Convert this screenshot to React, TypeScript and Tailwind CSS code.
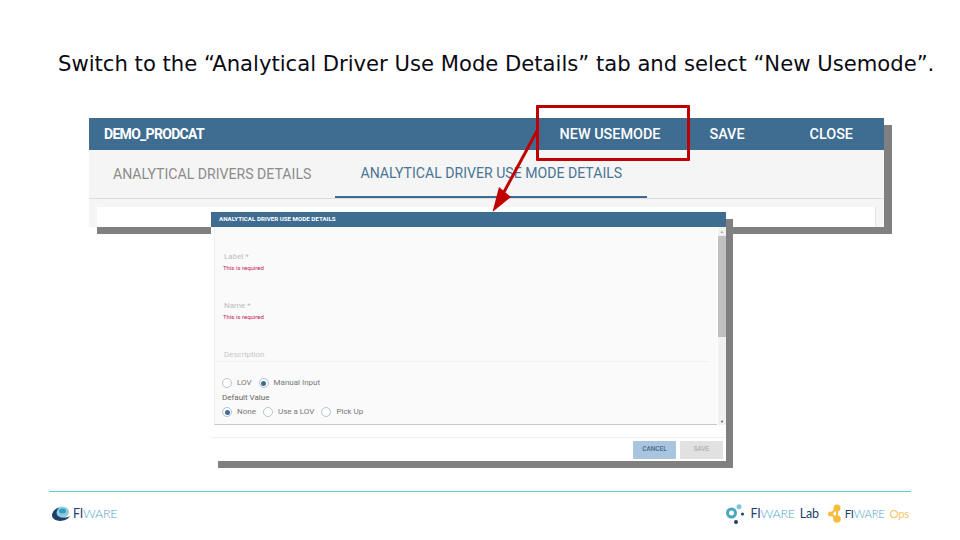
const roboto = "font-['Roboto',sans-serif]";

function Radio({ on }: { on?: boolean }) {
  return (
    <span className={`flex h-[10px] w-[10px] items-center justify-center rounded-full border ${on ? "border-[#a9c3d8]" : "border-[#b4c4d0]"} bg-white`}>
      {on && <span className="h-[5px] w-[5px] rounded-full bg-[#3f6c91]" />}
    </span>
  );
}

function RadioLabel({ on, label }: { on?: boolean; label: string }) {
  return (
    <span className="flex items-center gap-[5px]">
      <Radio on={on} />
      <span className="text-[8px] leading-[10px] text-[#777]">{label}</span>
    </span>
  );
}

function Field({ label, error }: { label: string; error?: boolean }) {
  return (
    <div className="flex h-[49px] flex-col">
      <span className="pl-[9px] text-[8px] leading-[10px] text-[#bdbdbd]">{label}</span>
      {error && <span className="mt-[2px] pl-[8px] text-[6px] leading-[8px] text-[#c2185b]">This is required</span>}
    </div>
  );
}

function Modal() {
  return (
    <div className={`absolute left-[211px] top-[212px] flex h-[249px] w-[515px] flex-col bg-white shadow-[7px_7px_0_#808080] ${roboto}`}>
      <div className="flex h-[15px] shrink-0 items-center bg-[#3f6c91] pl-[8px] text-[6.2px] font-bold text-white">
        ANALYTICAL DRIVER USE MODE DETAILS
      </div>
      <div className="flex h-[198px] shrink-0 pl-[3px]">
        <div className="flex w-[503px] flex-col border-b border-l border-[#c8c8c8] border-l-[#eeeeee] bg-[#fafafa] pt-[25px]">
          <Field label="Label *" error />
          <Field label="Name *" error />
          <div className="mr-[8px] h-[12px] shrink-0 border-b border-[#f1f1f1]">
            <span className="block pl-[9px] text-[8px] leading-[10px] text-[#c8c8c8]">Description</span>
          </div>
          <div className="mt-[16px] flex flex-col pl-[7px]">
            <div className="flex gap-[7px]">
              <RadioLabel label="LOV" />
              <RadioLabel on label="Manual Input" />
            </div>
            <span className="mt-[5px] text-[8px] leading-[10px] text-[#666]">Default Value</span>
            <div className="mt-[4px] flex gap-[7px]">
              <RadioLabel on label="None" />
              <RadioLabel label="Use a LOV" />
              <RadioLabel label="Pick Up" />
            </div>
          </div>
        </div>
        <div className="ml-[1px] flex w-[8px] flex-col items-center bg-[#f1f1f1]">
          <span className="mt-[3px] text-[4px] leading-[4px] text-[#a0a0a0]">▲</span>
          <span className="mt-[2px] h-[101px] w-full bg-[#c1c1c1]" />
          <span className="mt-auto mb-[1px] text-[4px] leading-[4px] text-[#505050]">▼</span>
        </div>
      </div>
      <div className="mt-[12px] flex justify-end gap-[4px] border-t border-[#f0f0f0] pr-[3px] pt-[3px]">
        <button className="h-[18px] w-[43px] rounded-[1px] bg-[#a9c4de] text-[6.5px] font-medium text-[#3f6c91]">CANCEL</button>
        <button className="h-[18px] w-[43px] bg-[#e1e1e1] text-[6.5px] text-[#a5a5a5]">SAVE</button>
      </div>
    </div>
  );
}

function Panel() {
  return (
    <div className={`ml-[89px] mt-[41px] flex h-[109px] w-[795px] flex-col overflow-hidden bg-[#f5f5f5] shadow-[8px_7px_0_#808080] ${roboto}`}>
      <div className="flex h-[32px] shrink-0 items-center bg-[#3f6c91] pt-[1px] text-[14.4px] font-medium text-white">
        <span className="ml-[15px] text-[14px] font-bold tracking-[-0.7px]">DEMO_PRODCAT</span>
        <span className="ml-auto">NEW USEMODE</span>
        <span className="ml-[49px]">SAVE</span>
        <span className="ml-[65px] mr-[31px]">CLOSE</span>
      </div>
      <div className="flex h-[49px] shrink-0 border-b border-[#dcdcdc] text-[14.1px]">
        <span className="ml-[24px] flex items-center pt-[1px] text-[#8c8c8c]">ANALYTICAL DRIVERS DETAILS</span>
        <span className="ml-[24px] flex w-[312px] items-center justify-center border-b-2 border-[#3f6c91] pt-[2px] text-[#4a7596]">
          ANALYTICAL DRIVER USE MODE DETAILS
        </span>
      </div>
      <div className="mx-[8px] mt-[8px] flex-1 border-r border-[#e4e4e4] bg-white" />
    </div>
  );
}

function Callout() {
  return (
    <>
      <div className="absolute left-[536px] top-[105px] h-[56px] w-[154px] rounded-[1px] border-[3px] border-[#c00000]" />
      <svg className="absolute left-[485px] top-[120px]" width="60" height="100" viewBox="0 0 60 100" fill="none">
        <path d="M53 9 L19 72" stroke="#c00000" strokeWidth="3" />
        <path d="M7.500 92 L14 67 L26 77 Z" fill="#c00000" />
      </svg>
    </>
  );
}

function Wordmark({ suffix, suffixColor, small }: { suffix?: string; suffixColor?: string; small?: boolean }) {
  return (
    <span className={`font-['Lato',sans-serif] leading-none tracking-[-0.25px] text-[#1d3f6e] ${small ? "text-[11.3px]" : "text-[12.5px]"}`}>
      FI<span className="font-light text-[#4fa5c2]">WARE</span>
      {suffix && <span className={`ml-[5px] ${suffixColor}`}>{suffix}</span>}
    </span>
  );
}

function Footer() {
  return (
    <div className="mx-[49px] mt-auto flex flex-col">
      <div className="h-px bg-[#63cdd5]" />
      <div className="flex h-[48px] items-center justify-between pb-[4px] pl-[2px] pr-[2px]">
        <div className="flex items-center gap-[2px]">
          <svg width="20" height="17" viewBox="0 0 20 17">
            <ellipse cx="11" cy="6" rx="7" ry="5.500" fill="#8fcbdb" />
            <ellipse cx="11.500" cy="5" rx="3.500" ry="2.500" fill="#2f9fc0" />
            <path d="M1 10 C1 5 5 2 8 2 C5 5 5 8 7 10 C10 12 15 12 19 10 C16 16 3 17 1 10 Z" fill="#1d3f6e" />
          </svg>
          <Wordmark />
        </div>
        <div className="flex items-center gap-[8px]">
          <div className="flex items-center gap-[4px]">
            <svg width="20" height="20" viewBox="0 0 20 20">
              <circle cx="5.500" cy="9" r="4" fill="none" stroke="#4ba7c0" strokeWidth="3" />
              <circle cx="13" cy="2.800" r="2.500" fill="#7fc4d6" />
              <circle cx="16.500" cy="10" r="1.500" fill="#1d3f6e" />
              <circle cx="10" cy="18" r="2" fill="#1d3f6e" />
            </svg>
            <Wordmark suffix="Lab" suffixColor="text-[#1d3f6e]" />
          </div>
          <div className="flex items-center gap-[2px]">
            <svg width="16" height="20" viewBox="0 0 16 20">
              <path d="M4 10 L10 4 L10 15 Z" fill="none" stroke="#f7bb3d" strokeWidth="2" />
              <circle cx="10" cy="4" r="3.500" fill="#f7bb3d" />
              <circle cx="3.500" cy="10" r="2.500" fill="#f7bb3d" />
              <circle cx="10" cy="15" r="3.800" fill="#f7bb3d" />
            </svg>
            <Wordmark small suffix="Ops" suffixColor="text-[#f5c56b]" />
          </div>
        </div>
      </div>
    </div>
  );
}

export default function App() {
  return (
    <div className="relative flex h-[540px] w-[960px] flex-col overflow-hidden bg-white">
      <h1 className="ml-[58px] mt-[50px] whitespace-nowrap font-['DejaVu_Sans',sans-serif] text-[21.15px] font-normal leading-[27px] text-[#0a0a14]">
        Switch to the “Analytical Driver Use Mode Details” tab and select “New Usemode”.
      </h1>
      <Panel />
      <Modal />
      <Callout />
      <Footer />
    </div>
  );
}
